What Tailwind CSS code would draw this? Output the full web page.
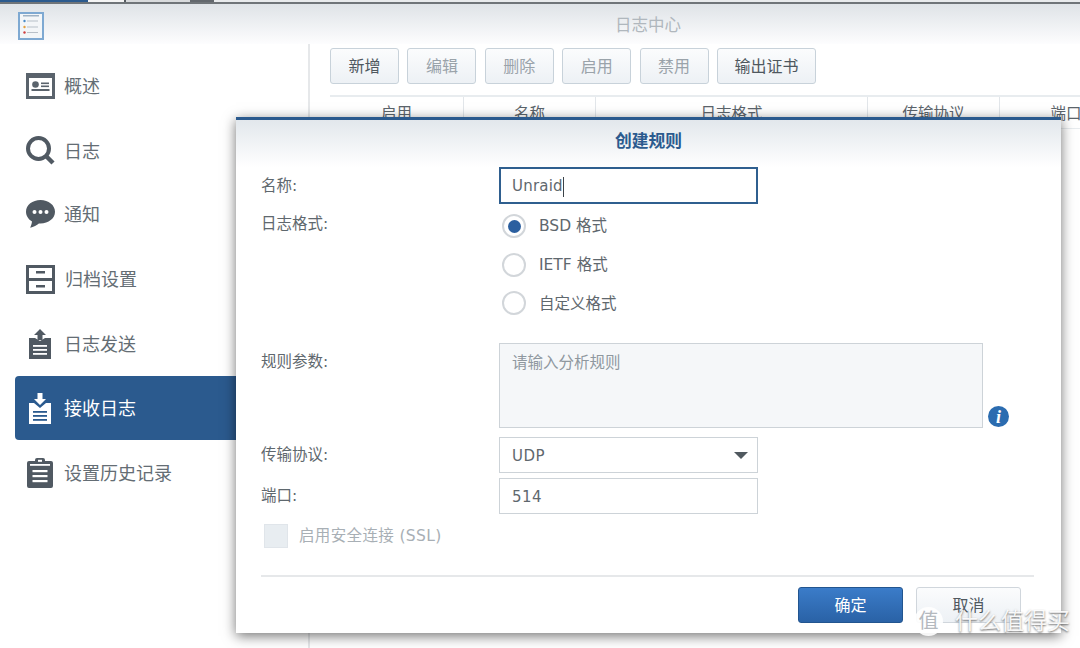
<!DOCTYPE html>
<html lang="zh-CN">
<head>
    <meta charset="UTF-8">
    <meta name="viewport" content="width=device-width, initial-scale=1.0">
    <title>日志中心</title>
    <script src="https://cdn.jsdelivr.net/npm/@tailwindcss/browser@4"></script>
</head>
<body class="bg-white">
<div class="relative w-[1080px] h-[648px] overflow-hidden bg-white text-[#5f686e] font-['DejaVu_Sans','Noto_Sans_CJK_SC',sans-serif]">

    <!-- top strip -->
    <div class="h-1 flex flex-col">
        <div class="h-[2px] flex bg-[#e8eaec]">
            <div class="w-[88px] bg-[#2b5a8e]"></div>
            <div class="w-[36px] bg-[#f4f4f4]"></div>
            <div class="w-[2px] bg-[#555b60]"></div>
            <div class="w-[64px] bg-[#d8dadc]"></div>
            <div class="w-[24px] bg-[#63686d]"></div>
        </div>
        <div class="h-[2px] bg-[#6f7478]"></div>
    </div>

    <!-- window title -->
    <div class="h-10 flex items-center justify-center relative pl-[216px] pt-[4px] bg-gradient-to-b from-[#dfe3e7] to-[#fdfdfe] text-[16.500px] text-[#b0b7bd]">
        <svg class="absolute left-[18px] top-[8px]" width="26" height="28" viewBox="0 0 26 28">
            <rect x="1" y="1" width="24" height="26" fill="#f3f6f8" stroke="#7ea9d2" stroke-width="2"/>
            <rect x="5" y="3" width="16" height="1.5" fill="#9fb2c4"/>
            <circle cx="6.5" cy="9" r="1.2" fill="#4a8cc7"/><rect x="9" y="8.5" width="11" height="1" fill="#b8c0c8"/>
            <circle cx="6.5" cy="15" r="1.2" fill="#e5a03c"/><rect x="9" y="14.5" width="11" height="1" fill="#b8c0c8"/>
            <circle cx="6.5" cy="20.5" r="1.2" fill="#cf3f3f"/><rect x="9" y="20" width="11" height="1" fill="#b8c0c8"/>
        </svg>
        日志中心
    </div>

    <div class="flex h-[604px]">
        <!-- sidebar -->
        <nav class="w-[264px] shrink-0 pt-[10px] pl-[15px] text-[18px] text-[#646d74]">
            <div class="h-[64.4px] flex items-center pl-[11px] gap-[9px]">
                <svg width="29" height="26" viewBox="0 0 29 26"><rect width="29" height="26" fill="#5a636c"/><rect x="3" y="5" width="23" height="18" fill="#fff"/><circle cx="9.5" cy="11.5" r="3.3" fill="#5a636c"/><rect x="5.5" y="16" width="18" height="2" fill="#5a636c"/><rect x="15" y="9.5" width="8" height="1.6" fill="#5a636c"/><rect x="15" y="12.5" width="8" height="1.6" fill="#5a636c"/></svg>
                <span>概述</span>
            </div>
            <div class="h-[64.4px] flex items-center pl-[11px] gap-[9px]">
                <svg width="29" height="29" viewBox="0 0 29 29"><circle cx="12.5" cy="12.5" r="10.5" fill="none" stroke="#505962" stroke-width="4"/><path d="M20 20l7 7" stroke="#505962" stroke-width="4.4"/></svg>
                <span class="mt-[2px]">日志</span>
            </div>
            <div class="h-[64.4px] flex items-center pl-[11px] gap-[9px]">
                <svg width="29" height="29" viewBox="0 0 29 29"><path d="M14.5 0C6.5 0 0 5 0 11.8c0 4.1 2.4 7.6 6 9.700-.2 2.400-1.300 4.800-1.800 6.300 3.300-.8 6.800-3 8.700-4.400.5 0 1 .1 1.600.1 8 0 14.500-5 14.500-11.700S22.500 0 14.500 0z" fill="#505962"/><circle cx="8.500" cy="12" r="2" fill="#fff"/><circle cx="14.500" cy="12" r="2" fill="#fff"/><circle cx="20.500" cy="12" r="2" fill="#fff"/></svg>
                <span>通知</span>
            </div>
            <div class="h-[64.4px] flex items-center pl-[11px] gap-[10px]">
                <svg width="29" height="29" viewBox="0 0 29 29"><rect x="1.500" y="1.500" width="26" height="26" fill="#fff" stroke="#505962" stroke-width="3"/><rect x="1" y="13" width="27" height="3" fill="#505962"/><rect x="10" y="6" width="9" height="2.500" fill="#505962"/><rect x="10" y="20" width="9" height="2.500" fill="#505962"/></svg>
                <span>归档设置</span>
            </div>
            <div class="h-[64.4px] flex items-center pl-[13px] gap-[12px]">
                <svg width="24" height="30" viewBox="0 0 24 30"><path d="M1 9h6l5 3 5-3h6v21H1z" fill="#505962"/><path d="M12 0l6 6h-3.500v5h-5V6H6z" fill="#505962"/><rect x="5" y="16" width="14" height="1.800" fill="#fff"/><rect x="5" y="20" width="14" height="1.800" fill="#fff"/><rect x="5" y="24" width="14" height="1.800" fill="#fff"/></svg>
                <span class="mt-[2px]">日志发送</span>
            </div>
            <div class="h-[64.4px] flex items-center pl-[13px] gap-[12px] bg-[#2b5a8e] rounded-l-[4px] text-white">
                <svg width="24" height="31" viewBox="0 0 24 31"><path d="M1 10h5l6 5 6-5h5v21H1z" fill="#fff"/><path d="M9.500 0h5v6H18l-6 6-6-6h3.500z" fill="#fff"/><rect x="5" y="18" width="14" height="1.800" fill="#2b5a8e"/><rect x="5" y="22" width="14" height="1.800" fill="#2b5a8e"/><rect x="5" y="26" width="14" height="1.800" fill="#2b5a8e"/></svg>
                <span>接收日志</span>
            </div>
            <div class="h-[64.4px] flex items-center pl-[12px] gap-[11px]">
                <svg width="26" height="30" viewBox="0 0 26 30"><path d="M2 3h6V2a2 2 0 012-2h6a2 2 0 012 2v1h6a2 2 0 012 2v23a2 2 0 01-2 2H2a2 2 0 01-2-2V5a2 2 0 012-2z" fill="#505962"/><rect x="3" y="6" width="20" height="1.800" fill="#fff"/><rect x="11" y="1.800" width="4" height="2" fill="#fff"/><rect x="5.500" y="12" width="15" height="2.200" fill="#fff"/><rect x="5.500" y="17" width="15" height="2.200" fill="#fff"/><rect x="5.500" y="22" width="15" height="2.200" fill="#fff"/></svg>
                <span class="mt-[2px]">设置历史记录</span>
            </div>
        </nav>

        <!-- main panel -->
        <main class="flex-1 ml-[44px] border-l-2 border-[#e6e8ea] min-w-0 pl-[20px] pt-[4px]">
            <div class="flex gap-[8.400px] text-base text-[#9aa3aa]">
                <button class="w-[69px] h-9 pt-[2px] rounded-[3px] border border-[#c8d2da] bg-gradient-to-b from-[#fbfcfd] to-[#edf1f5] text-[#4f585f]">新增</button>
                <button class="w-[69px] h-9 pt-[2px] rounded-[3px] border border-[#c8d2da] bg-gradient-to-b from-[#fbfcfd] to-[#edf1f5]">编辑</button>
                <button class="w-[69px] h-9 pt-[2px] rounded-[3px] border border-[#c8d2da] bg-gradient-to-b from-[#fbfcfd] to-[#edf1f5]">删除</button>
                <button class="w-[69px] h-9 pt-[2px] rounded-[3px] border border-[#c8d2da] bg-gradient-to-b from-[#fbfcfd] to-[#edf1f5]">启用</button>
                <button class="w-[69px] h-9 pt-[2px] rounded-[3px] border border-[#c8d2da] bg-gradient-to-b from-[#fbfcfd] to-[#edf1f5]">禁用</button>
                <button class="w-[99px] h-9 pt-[2px] rounded-[3px] border border-[#c8d2da] bg-gradient-to-b from-[#fbfcfd] to-[#edf1f5] text-[#4f585f]">输出证书</button>
            </div>
            <div class="mt-[11px] w-[802px] h-[34px] grid grid-cols-[134px_132px_272px_132px_132px] border-y border-t-2 border-[#e8ecef] text-[15.500px] text-[#5b646b] leading-[34px] text-center">
                <div class="border-r border-[#e2e6ea]">启用</div>
                <div class="border-r border-[#e2e6ea]">名称</div>
                <div class="border-r border-[#e2e6ea]">日志格式</div>
                <div class="border-r border-[#e2e6ea]">传输协议</div>
                <div>端口</div>
            </div>
        </main>
    </div>

    <!-- dialog -->
    <div class="absolute left-[236px] top-[117px] w-[825px] h-[516px] bg-white border-t-[3px] border-[#2b5a8e] shadow-[0_3px_12px_rgba(0,0,0,0.55)] text-[15.500px] text-[#5f686e]">
        <div class="h-[47px] pb-[4px] flex items-center justify-center bg-gradient-to-b from-[#e2e7ec] to-white text-[16.750px] font-bold text-[#2b5a8e]">创建规则</div>

        <div class="pl-[25px] pr-[27px]">
            <div class="flex items-center h-[37px]">
                <label class="w-[238px] pt-[2px]">名称:</label>
                <div class="w-[259px] h-[37px] pt-[2px] border-2 border-[#2f5f8f] pl-[11px] flex items-center text-[15px] tracking-[0.2px]">Unraid<span class="w-px h-5 bg-[#3c4348]"></span></div>
            </div>

            <div class="flex mt-[10px]">
                <label class="w-[238px] leading-[20px]">日志格式:</label>
                <div class="flex flex-col gap-[14.500px]">
                    <div class="flex items-center h-6 pl-[3px] gap-[13px]">
                        <span class="w-6 h-6 rounded-full border-2 border-[#d2d6da] flex items-center justify-center"><span class="w-[13px] h-[13px] rounded-full bg-[#2b5f9f]"></span></span>
                        <span class="mt-[2px]">BSD 格式</span>
                    </div>
                    <div class="flex items-center h-6 pl-[3px] gap-[13px]">
                        <span class="w-6 h-6 rounded-full border-2 border-[#d2d6da]"></span>
                        <span class="mt-[2px]">IETF 格式</span>
                    </div>
                    <div class="flex items-center h-6 pl-[3px] gap-[13px]">
                        <span class="w-6 h-6 rounded-full border-2 border-[#d2d6da]"></span>
                        <span class="mt-[4px]">自定义格式</span>
                    </div>
                </div>
            </div>

            <div class="flex mt-[28px]">
                <label class="w-[238px] leading-[38px]">规则参数:</label>
                <div class="w-[484px] h-[85px] border border-[#cdd3d8] bg-[#f5f7f9] px-3 leading-[38px] text-[#8f989f]">请输入分析规则</div>
                <svg class="self-end ml-[5px] mb-[1px]" width="21" height="21" viewBox="0 0 21 21"><circle cx="10.500" cy="10.500" r="10.500" fill="#2b6cb0"/><text x="10.500" y="16.500" text-anchor="middle" font-family="Liberation Serif" font-style="italic" font-weight="700" font-size="18" fill="#fff">i</text></svg>
            </div>

            <div class="flex items-center mt-[9px]">
                <label class="w-[238px] pt-[2px]">传输协议:</label>
                <div class="relative w-[259px] h-9 pt-[2px] border border-[#cdd3d8] pl-3 flex items-center text-[15px] tracking-[0.5px]">
                    UDP
                    <span class="absolute right-[9px] top-[14px] border-x-[7px] border-x-transparent border-t-[7px] border-t-[#50595f]"></span>
                </div>
            </div>

            <div class="flex items-center mt-[5px]">
                <label class="w-[238px] pt-[2px]">端口:</label>
                <div class="w-[259px] h-9 pt-[2px] border border-[#cdd3d8] pl-3 flex items-center text-[15px] tracking-[0.5px]">514</div>
            </div>

            <div class="flex items-center h-6 mt-[10px] pl-[3px] gap-[11px] text-[#a8afb5] tracking-[0.35px]">
                <span class="w-6 h-6 bg-[#e8edf1] border border-[#e0e5ea]"></span>
                <span class="mt-[2px]">启用安全连接 (SSL)</span>
            </div>

            <div class="mt-[27px] h-[2px] bg-[#e6e8ea]"></div>

            <div class="flex justify-end gap-[13px] mt-[10px] mr-[13px] text-base">
                <button class="w-[105px] h-9 pt-[2px] rounded-[3px] border border-[#22558f] bg-gradient-to-b from-[#3b7cc9] to-[#2a62a6] text-white">确定</button>
                <button class="w-[105px] h-9 pt-[2px] rounded-[3px] border border-[#d0d6dc] bg-gradient-to-b from-[#fbfcfd] to-[#edf1f5] text-[#4f585f]">取消</button>
            </div>
        </div>
    </div>

    <!-- watermark -->
    <div class="absolute left-[914px] top-[606px] flex items-center text-white/90 [text-shadow:0_1px_2px_rgba(70,70,70,0.8)]">
        <span class="w-[29px] h-[29px] rounded-full bg-white/90 flex items-center justify-center text-[20px] text-[#b4b9be] [text-shadow:none]">值</span>
        <span class="ml-[12px] text-[23px] leading-[30px] whitespace-nowrap">什么值得买</span>
    </div>
</div>
</body>
</html>
